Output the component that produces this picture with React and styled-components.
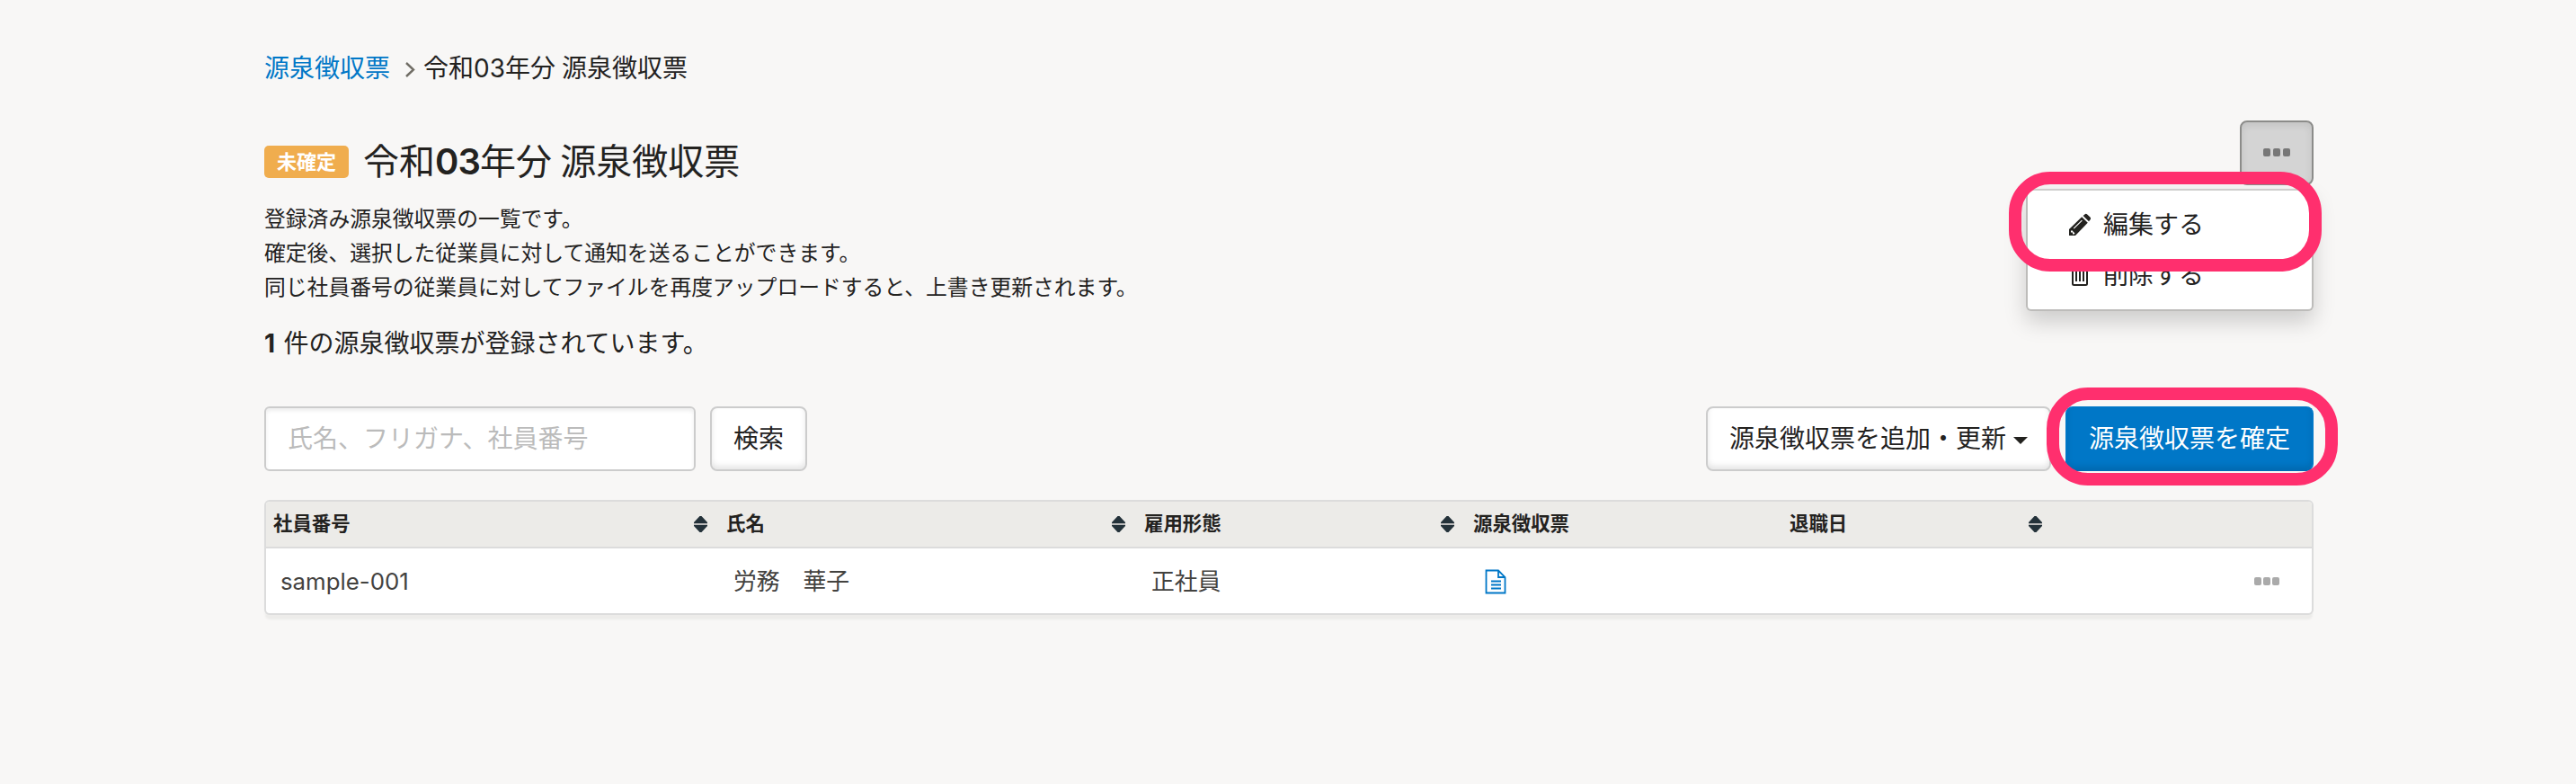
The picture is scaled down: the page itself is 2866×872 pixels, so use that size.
import React from "react";
import styled, { createGlobalStyle } from "styled-components";

const GlobalStyle = createGlobalStyle`
  *, *::before, *::after { box-sizing: border-box; }
  body {
    margin: 0;
    min-height: 872px;
    background: #f8f7f6;
    color: #23221f;
    font: 400 28px/40px Inter, "Noto Sans CJK JP", sans-serif;
  }
`;

const Page = styled.main`
  width: 2280px;
  margin: 0 292px 0 294px;
  padding-top: 56px;
`;

const Breadcrumb = styled.nav`
  display: flex;
  align-items: center;
  height: 40px;
  white-space: pre;
`;

const CrumbLink = styled.a`
  color: #0077c7;
  text-decoration: none;
`;

const Chevron = styled.svg`
  width: 12px;
  height: 17px;
  margin: 2px 9px 0 16px;
`;

const CrumbCurrent = styled.span`
  word-spacing: -0.8px;
`;

const Header = styled.header`
  display: flex;
  justify-content: space-between;
  height: 72px;
  margin-top: 38px;
`;

const TitleGroup = styled.div`
  display: flex;
  align-items: center;
  height: 60px;
  margin-top: 16px;
`;

const Badge = styled.span`
  width: 94px;
  height: 36px;
  border-radius: 5px;
  background: #f0ad4e;
  color: #fff;
  font-size: 22px;
  font-weight: 700;
  line-height: 36px;
  text-align: center;
`;

const Title = styled.h1`
  margin: 0 0 0 16px;
  font-size: 40px;
  font-weight: 400;
  line-height: 60px;
  word-spacing: -2px;
`;

const TitleNumber = styled.span`
  font-weight: 600;
  letter-spacing: -0.9px;
`;

const CountNumber = styled.span`
  margin-right: 1.5px;
  font-weight: 700;
`;

const MenuAnchor = styled.div`
  position: relative;
  width: 82px;
  height: 72px;
`;

const MoreButton = styled.button`
  display: flex;
  align-items: center;
  justify-content: center;
  width: 82px;
  height: 72px;
  padding: 0 0 1px;
  border: 2px solid #8c8c8a;
  border-radius: 8px;
  background: #d4d4d4;
  box-shadow: inset 0 3px 8px rgba(0, 0, 0, 0.09);
`;

const DotRow = styled.span`
  display: flex;
  gap: ${(p) => p.$gap}px;
`;

const Dot = styled.i`
  width: 8.4px;
  height: 8.4px;
  border-radius: 2px;
  background: ${(p) => p.$color};
`;

const Menu = styled.div`
  position: absolute;
  top: 76px;
  right: 0;
  display: flex;
  flex-direction: column;
  width: 320px;
  height: 136px;
  padding-top: 10px;
  border: 2px solid #bdbcba;
  border-top-color: #cfcecc;
  border-radius: 6px;
  background: #fff;
  box-shadow: 0 12px 24px rgba(0, 0, 0, 0.175);
`;

const MenuItem = styled.div`
  display: flex;
  align-items: center;
  height: 56px;
  padding-left: 46px;
`;

const MenuIcon = styled.svg`
  width: 24px;
  height: 26px;
  margin-right: 14px;
`;

const Ring = styled.div`
  position: absolute;
  top: ${(p) => p.$top}px;
  left: ${(p) => p.$left}px;
  width: ${(p) => p.$width}px;
  height: ${(p) => p.$height}px;
  border: 14px solid #ff2f6e;
  border-radius: 46px;
  pointer-events: none;
`;

const Description = styled.p`
  margin: 19px 0 0;
  font-size: 23.8px;
  line-height: 38px;
`;

const Count = styled.p`
  margin: 23px 0 0;
  line-height: 40px;
`;

const Toolbar = styled.div`
  display: flex;
  gap: 16px;
  height: 72px;
  margin-top: 50px;
`;

const SearchInput = styled.input`
  width: 480px;
  height: 72px;
  padding: 0 24px;
  border: 2px solid #ccc;
  border-radius: 6px;
  background: #fff;
  box-shadow: inset 0 3px 4px rgba(0, 0, 0, 0.07);
  font: inherit;
  &::placeholder { color: #bbb; opacity: 1; }
`;

const Button = styled.button`
  display: flex;
  align-items: center;
  justify-content: center;
  width: ${(p) => p.$width}px;
  height: 72px;
  padding: 0;
  border: 2px solid ${(p) => (p.$primary ? "#0077c7" : "#ccc")};
  border-bottom-color: ${(p) => (p.$primary ? "#006bb3" : "#ccc")};
  border-radius: 8px;
  background: ${(p) => (p.$primary ? "#0077c7" : "#fff")};
  box-shadow: inset 0 -4px 6px rgba(0, 0, 0, 0.1);
  color: ${(p) => (p.$primary ? "#fff" : "#23221f")};
  font: inherit;
  white-space: nowrap;
`;

const Caret = styled.i`
  margin: 3px 0 0 8px;
  border: 8px solid transparent;
  border-top-color: #23221f;
  border-bottom: 0;
`;

const Actions = styled.div`
  display: flex;
  gap: 16px;
  margin-left: auto;
`;

const ConfirmAnchor = styled.div`
  position: relative;
`;

const Table = styled.section`
  height: 128px;
  margin-top: 32px;
  border: 2px solid #dcdcdc;
  border-radius: 6px;
  background: #fff;
  box-shadow: 0 6px 2px -1px #edecea;
`;

const Row = styled.div`
  display: grid;
  grid-template-columns: 504px 465px 366px 352px 302px 1fr;
  align-items: center;
`;

const HeadRow = styled(Row)`
  height: 52px;
  border-bottom: 2px solid #dcdcdc;
  border-radius: 4px 4px 0 0;
  background: #ecebe8;
  font-size: 21.42px;
  font-weight: 700;
`;

const BodyRow = styled(Row)`
  height: 72px;
  padding-top: 1px;
  color: #43423f;
  font-size: 25.8px;
`;

const HeadCell = styled.div`
  display: flex;
  align-items: center;
  justify-content: space-between;
  height: 40px;
  padding: 0 13px 2px 8px;
`;

const Cell = styled.div`
  display: flex;
  align-items: center;
  justify-content: ${(p) => (p.$end ? "flex-end" : "flex-start")};
  padding: 0 36px 0 16px;
  white-space: pre;
`;

const SortSvg = styled.svg`
  width: 15px;
  height: 18px;
  margin-top: 2px;
`;

const DocSvg = styled.svg`
  width: 24px;
  height: 28px;
  margin: 0 0 0 5px;
`;

const Dots = ({ color, gap }) => (
  <DotRow $gap={gap}>
    <Dot $color={color} />
    <Dot $color={color} />
    <Dot $color={color} />
  </DotRow>
);

const SortIcon = () => (
  <SortSvg viewBox="0 0 15 18">
    <path d="M0 8V7L6.500 0h2L15 7v1zM0 10h15v1l-6.500 7h-2L0 11z" fill="#24323a" />
    <path d="M0 8h15v2H0z" fill="#bbb" />
  </SortSvg>
);

const columns = [
  { label: "社員番号", sortable: true },
  { label: "氏名", sortable: true },
  { label: "雇用形態", sortable: true },
  { label: "源泉徴収票", sortable: false },
  { label: "退職日", sortable: true },
];

export default function App() {
  return (
    <>
      <GlobalStyle />
      <Page>
        <Breadcrumb>
          <CrumbLink>源泉徴収票</CrumbLink>
          <Chevron viewBox="0 0 12 17" fill="none" stroke="#706d65" strokeWidth="2.4">
            <path d="m2 1 8 7.5L2 16" />
          </Chevron>
          <CrumbCurrent>令和03年分 源泉徴収票</CrumbCurrent>
        </Breadcrumb>

        <Header>
          <TitleGroup>
            <Badge>未確定</Badge>
            <Title>
              令和<TitleNumber>03</TitleNumber>年分 源泉徴収票
            </Title>
          </TitleGroup>
          <MenuAnchor>
            <MoreButton aria-label="メニュー">
              <Dots color="#777" gap={2.4} />
            </MoreButton>
            <Menu>
              <MenuItem>
                <MenuIcon viewBox="0 0 24 26">
                  <path
                    fill="#23221f"
                    fillRule="evenodd"
                    d="M0 25v-7L14.2 4.2l6.6 6.6L7 25zM2 20v1.500h2v2h1.600L6.500 22.500 3 19zM4.800 16.800l.8.8L14.800 8.500l-.8-.8zM15.6 2.9 17.4 1.4q1.4-1.3 2.8 0l3.2 3.2q1.3 1.4 0 2.8L22 9.3z"
                  />
                </MenuIcon>
                編集する
              </MenuItem>
              <MenuItem>
                <MenuIcon viewBox="0 0 24 26" fill="none" stroke="#23221f" strokeWidth="2">
                  <path d="M4 5v17.500q0 1.500 1.500 1.500h13q1.500 0 1.500-1.500V5M2 4h20M8 4V1h8v3M8 8v12M12 8v12M16 8v12" />
                </MenuIcon>
                削除する
              </MenuItem>
            </Menu>
            <Ring $top={57} $left={-257} $width={348} $height={111} />
          </MenuAnchor>
        </Header>

        <Description>
          登録済み源泉徴収票の一覧です。
          <br />
          確定後、選択した従業員に対して通知を送ることができます。
          <br />
          同じ社員番号の従業員に対してファイルを再度アップロードすると、上書き更新されます。
        </Description>
        <Count>
          <CountNumber>1</CountNumber> 件の源泉徴収票が登録されています。
        </Count>

        <Toolbar>
          <SearchInput placeholder="氏名、フリガナ、社員番号" />
          <Button $width={108}>検索</Button>
          <Actions>
            <Button $width={384}>
              源泉徴収票を追加・更新
              <Caret />
            </Button>
            <ConfirmAnchor>
              <Button $primary $width={276}>源泉徴収票を確定</Button>
              <Ring $top={-21} $left={-21} $width={324} $height={109} />
            </ConfirmAnchor>
          </Actions>
        </Toolbar>

        <Table>
          <HeadRow>
            {columns.map((c) => (
              <HeadCell key={c.label}>
                {c.label}
                {c.sortable && <SortIcon />}
              </HeadCell>
            ))}
          </HeadRow>
          <BodyRow>
            <Cell>sample-001</Cell>
            <Cell>労務　華子</Cell>
            <Cell>正社員</Cell>
            <Cell>
              <DocSvg viewBox="0 0 24 28" fill="none" stroke="#0077c7" strokeWidth="1.800">
                <path d="M1.500 1.500h13.500l7.500 7.500v17.500h-21zM15 1.500V9h7.500M7 13.500h11M7 17.500h11M7 21.500h11" />
              </DocSvg>
            </Cell>
            <Cell />
            <Cell $end>
              <Dots color="#aaa" gap={1.4} />
            </Cell>
          </BodyRow>
        </Table>
      </Page>
    </>
  );
}
